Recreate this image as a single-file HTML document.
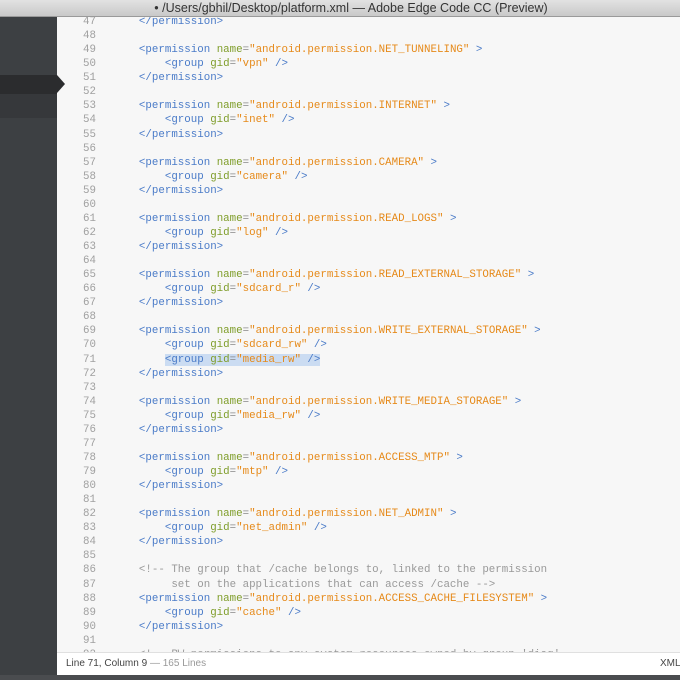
<!DOCTYPE html>
<html><head><meta charset="utf-8"><style>
*{margin:0;padding:0;box-sizing:border-box}
html,body{width:680px;height:680px;overflow:hidden}
body{background:#f7f7f7;position:relative;font-family:"Liberation Mono",monospace}
#title{position:absolute;left:0;top:0;width:680px;height:17px;background:linear-gradient(#e2e2e2,#c9c9c9);border-bottom:1px solid #9a9a9a;z-index:5;font-family:"Liberation Sans",sans-serif;font-size:12.5px;color:#333;text-align:center;line-height:17px;padding-left:22px}
#side{position:absolute;left:0;top:17px;width:57px;height:663px;background:#3d4043;z-index:3}
#band{position:absolute;left:0;top:58px;width:57px;height:19px;background:#2b2c2e}
#arrow{position:absolute;left:57px;top:75px;width:0;height:0;border-top:9.5px solid transparent;border-bottom:9.5px solid transparent;border-left:8px solid #2b2c2e;z-index:4}
#below{position:absolute;left:0;top:77px;width:57px;height:24px;background:#36383b}
#code{position:absolute;left:57px;top:15px;width:623px;height:638px;overflow:hidden;font-size:10.8px;line-height:14.07px}
.l{height:14.07px;position:relative;white-space:pre}
.n{display:inline-block;width:39px;text-align:right;color:#a0a0a0;margin-right:17px}
.t{color:#4a7bc8}.a{color:#7f9d2a}.v{color:#e68a1a}.e{color:#888}.c{color:#999}
.hl{background:#cbdcf2}
#status{position:absolute;left:57px;top:652px;width:623px;height:23px;background:#fff;border-top:1px solid #e0e0e0;z-index:4;font-family:"Liberation Sans",sans-serif;font-size:10px;line-height:22px;color:#444}
#bot{position:absolute;left:0;top:675px;width:680px;height:5px;background:#4a4c4f;z-index:6}
</style></head><body>
<div id="title">• /Users/gbhil/Desktop/platform.xml — Adobe Edge Code CC (Preview)</div>
<div id="side"><div id="band"></div><div id="below"></div></div>
<div id="arrow"></div>
<div id="code"><div class="l"><span class="n">47</span>    <span class="t">&lt;/permission&gt;</span></div><div class="l"><span class="n">48</span></div><div class="l"><span class="n">49</span>    <span class="t">&lt;permission </span><span class="a">name</span><span class="e">=</span><span class="v">"android.permission.NET_TUNNELING"</span><span class="t"> &gt;</span></div><div class="l"><span class="n">50</span>        <span class="t">&lt;group </span><span class="a">gid</span><span class="e">=</span><span class="v">"vpn"</span><span class="t"> /&gt;</span></div><div class="l"><span class="n">51</span>    <span class="t">&lt;/permission&gt;</span></div><div class="l"><span class="n">52</span></div><div class="l"><span class="n">53</span>    <span class="t">&lt;permission </span><span class="a">name</span><span class="e">=</span><span class="v">"android.permission.INTERNET"</span><span class="t"> &gt;</span></div><div class="l"><span class="n">54</span>        <span class="t">&lt;group </span><span class="a">gid</span><span class="e">=</span><span class="v">"inet"</span><span class="t"> /&gt;</span></div><div class="l"><span class="n">55</span>    <span class="t">&lt;/permission&gt;</span></div><div class="l"><span class="n">56</span></div><div class="l"><span class="n">57</span>    <span class="t">&lt;permission </span><span class="a">name</span><span class="e">=</span><span class="v">"android.permission.CAMERA"</span><span class="t"> &gt;</span></div><div class="l"><span class="n">58</span>        <span class="t">&lt;group </span><span class="a">gid</span><span class="e">=</span><span class="v">"camera"</span><span class="t"> /&gt;</span></div><div class="l"><span class="n">59</span>    <span class="t">&lt;/permission&gt;</span></div><div class="l"><span class="n">60</span></div><div class="l"><span class="n">61</span>    <span class="t">&lt;permission </span><span class="a">name</span><span class="e">=</span><span class="v">"android.permission.READ_LOGS"</span><span class="t"> &gt;</span></div><div class="l"><span class="n">62</span>        <span class="t">&lt;group </span><span class="a">gid</span><span class="e">=</span><span class="v">"log"</span><span class="t"> /&gt;</span></div><div class="l"><span class="n">63</span>    <span class="t">&lt;/permission&gt;</span></div><div class="l"><span class="n">64</span></div><div class="l"><span class="n">65</span>    <span class="t">&lt;permission </span><span class="a">name</span><span class="e">=</span><span class="v">"android.permission.READ_EXTERNAL_STORAGE"</span><span class="t"> &gt;</span></div><div class="l"><span class="n">66</span>        <span class="t">&lt;group </span><span class="a">gid</span><span class="e">=</span><span class="v">"sdcard_r"</span><span class="t"> /&gt;</span></div><div class="l"><span class="n">67</span>    <span class="t">&lt;/permission&gt;</span></div><div class="l"><span class="n">68</span></div><div class="l"><span class="n">69</span>    <span class="t">&lt;permission </span><span class="a">name</span><span class="e">=</span><span class="v">"android.permission.WRITE_EXTERNAL_STORAGE"</span><span class="t"> &gt;</span></div><div class="l"><span class="n">70</span>        <span class="t">&lt;group </span><span class="a">gid</span><span class="e">=</span><span class="v">"sdcard_rw"</span><span class="t"> /&gt;</span></div><div class="l"><span class="n">71</span>        <span class="hl"><span class="t">&lt;group </span><span class="a">gid</span><span class="e">=</span><span class="v">"media_rw"</span><span class="t"> /&gt;</span></span></div><div class="l"><span class="n">72</span>    <span class="t">&lt;/permission&gt;</span></div><div class="l"><span class="n">73</span></div><div class="l"><span class="n">74</span>    <span class="t">&lt;permission </span><span class="a">name</span><span class="e">=</span><span class="v">"android.permission.WRITE_MEDIA_STORAGE"</span><span class="t"> &gt;</span></div><div class="l"><span class="n">75</span>        <span class="t">&lt;group </span><span class="a">gid</span><span class="e">=</span><span class="v">"media_rw"</span><span class="t"> /&gt;</span></div><div class="l"><span class="n">76</span>    <span class="t">&lt;/permission&gt;</span></div><div class="l"><span class="n">77</span></div><div class="l"><span class="n">78</span>    <span class="t">&lt;permission </span><span class="a">name</span><span class="e">=</span><span class="v">"android.permission.ACCESS_MTP"</span><span class="t"> &gt;</span></div><div class="l"><span class="n">79</span>        <span class="t">&lt;group </span><span class="a">gid</span><span class="e">=</span><span class="v">"mtp"</span><span class="t"> /&gt;</span></div><div class="l"><span class="n">80</span>    <span class="t">&lt;/permission&gt;</span></div><div class="l"><span class="n">81</span></div><div class="l"><span class="n">82</span>    <span class="t">&lt;permission </span><span class="a">name</span><span class="e">=</span><span class="v">"android.permission.NET_ADMIN"</span><span class="t"> &gt;</span></div><div class="l"><span class="n">83</span>        <span class="t">&lt;group </span><span class="a">gid</span><span class="e">=</span><span class="v">"net_admin"</span><span class="t"> /&gt;</span></div><div class="l"><span class="n">84</span>    <span class="t">&lt;/permission&gt;</span></div><div class="l"><span class="n">85</span></div><div class="l"><span class="n">86</span>    <span class="c">&lt;!-- The group that /cache belongs to, linked to the permission</span></div><div class="l"><span class="n">87</span><span class="c">         set on the applications that can access /cache --&gt;</span></div><div class="l"><span class="n">88</span>    <span class="t">&lt;permission </span><span class="a">name</span><span class="e">=</span><span class="v">"android.permission.ACCESS_CACHE_FILESYSTEM"</span><span class="t"> &gt;</span></div><div class="l"><span class="n">89</span>        <span class="t">&lt;group </span><span class="a">gid</span><span class="e">=</span><span class="v">"cache"</span><span class="t"> /&gt;</span></div><div class="l"><span class="n">90</span>    <span class="t">&lt;/permission&gt;</span></div><div class="l"><span class="n">91</span></div><div class="l"><span class="n">92</span>    <span class="c">&lt;!-- RW permissions to any system resources owned by group 'diag'.</span></div></div>
<div id="status"><span style="position:absolute;left:9px">Line 71, Column 9 <span style="color:#999">— 165 Lines</span></span><span style="position:absolute;left:603px">XML</span></div>
<div id="bot"></div>
</body></html>
